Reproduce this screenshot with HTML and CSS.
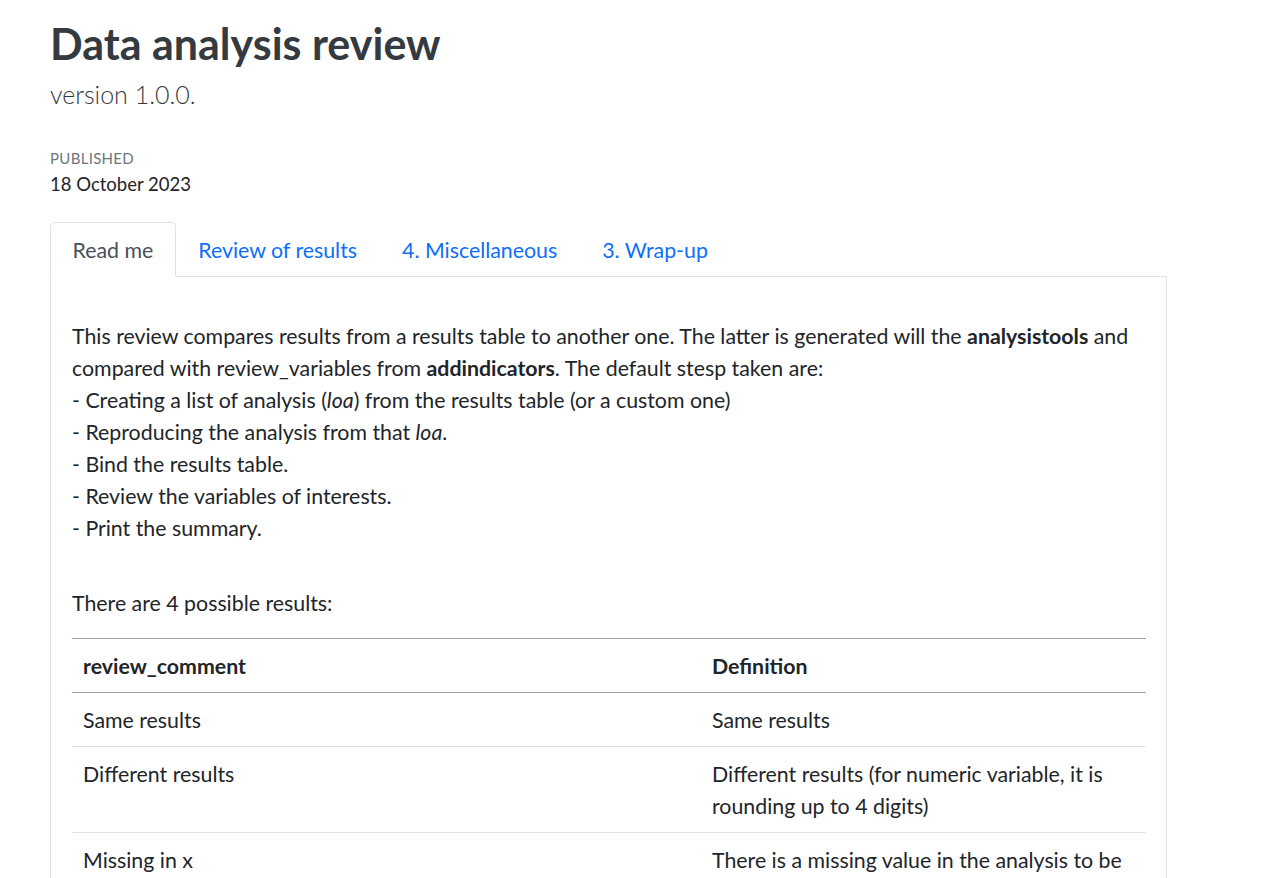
FILE: index.html
```html
<!DOCTYPE html>
<html lang="en">
<head>
<meta charset="utf-8">
<title>Data analysis review</title>
<link rel="stylesheet" href="styles.css">
</head>
<body>
<main class="page">
  <header class="title-block">
    <h1 class="title">Data analysis review</h1>
    <p class="subtitle">version 1.0.0.</p>
    <div class="meta">
      <div class="meta-heading">PUBLISHED</div>
      <div class="meta-contents">18 October 2023</div>
    </div>
  </header>

  <section class="tabset">
    <ul class="nav-tabs">
      <li class="nav-item"><a class="nav-link active" href="#">Read me</a></li>
      <li class="nav-item"><a class="nav-link" href="#">Review of results</a></li>
      <li class="nav-item"><a class="nav-link" href="#">4. Miscellaneous</a></li>
      <li class="nav-item"><a class="nav-link" href="#">3. Wrap-up</a></li>
    </ul>
    <div class="tab-content">
      <p class="intro">This review compares results from a results table to another one. The latter is generated will the <strong>analysistools</strong> and compared with review_variables from <strong>addindicators</strong>. The default stesp taken are:<br>
      - Creating a list of analysis (<em>loa</em>) from the results table (or a custom one)<br>
      - Reproducing the analysis from that <em>loa</em>.<br>
      - Bind the results table.<br>
      - Review the variables of interests.<br>
      - Print the summary.</p>
      <p class="lead-in">There are 4 possible results:</p>
      <table class="results">
        <colgroup><col class="col-a"><col class="col-b"></colgroup>
        <thead>
          <tr><th>review_comment</th><th>Definition</th></tr>
        </thead>
        <tbody>
          <tr><td>Same results</td><td>Same results</td></tr>
          <tr><td>Different results</td><td>Different results (for numeric variable, it is rounding up to 4 digits)</td></tr>
          <tr><td>Missing in x</td><td>There is a missing value in the analysis to be reviewed</td></tr>
          <tr><td>Missing in y</td><td>There is a missing value in the review</td></tr>
        </tbody>
      </table>
    </div>
  </section>
</main>
</body>
</html>
```

FILE: styles.css
```css
html, body {
  margin: 0;
  padding: 0;
  background: #ffffff;
}

body {
  font-family: Lato, "Liberation Sans", sans-serif;
  font-size: 21.33px;
  line-height: 32px;
  color: #212529;
}

.page {
  width: 1117px;
  margin-left: 50px;
}

.title-block {
  padding-top: 13px;
}

.title {
  margin: 0;
  font-size: 43px;
  line-height: 62px;
  font-weight: 700;
  color: #343a40;
}

.subtitle {
  margin: 0;
  font-size: 25px;
  line-height: 38px;
  font-weight: 300;
  color: #343a40;
}

.meta {
  margin-top: 35px;
}

.meta-heading {
  font-size: 15px;
  line-height: 20px;
  color: #6c757d;
  letter-spacing: 0.3px;
}

.meta-contents {
  margin-top: 3px;
  font-size: 18.5px;
  line-height: 26px;
  color: #212529;
}

.tabset {
  margin-top: 25px;
}

.nav-tabs {
  list-style: none;
  margin: 0;
  padding: 0;
  display: flex;
  border-bottom: 1px solid #dee2e6;
}

.nav-item {
  margin-bottom: -1px;
}

.nav-link {
  display: block;
  padding: 10.5px 21.5px;
  line-height: 32px;
  color: #0d6efd;
  text-decoration: none;
  border: 1px solid transparent;
  border-top-left-radius: 5px;
  border-top-right-radius: 5px;
}

.nav-link.active {
  color: #495057;
  background: #ffffff;
  border-color: #dee2e6 #dee2e6 #ffffff;
}

.tab-content {
  border: 1px solid #dee2e6;
  border-top: none;
  padding: 43px 20px 40px 21px;
}

.intro {
  margin: 0;
}

.lead-in {
  margin: 43px 0 19px;
}

.results {
  width: 100%;
  border-collapse: collapse;
  border-top: 1px solid #9aa5b1;
}

.col-a {
  width: 629px;
}

.results th,
.results td {
  text-align: left;
  vertical-align: top;
  padding: 10.5px 11px;
}

.results th {
  font-weight: 700;
  border-bottom: 1px solid #9aa5b1;
}

.results td {
  border-bottom: 1px solid #dee2e6;
}
```
